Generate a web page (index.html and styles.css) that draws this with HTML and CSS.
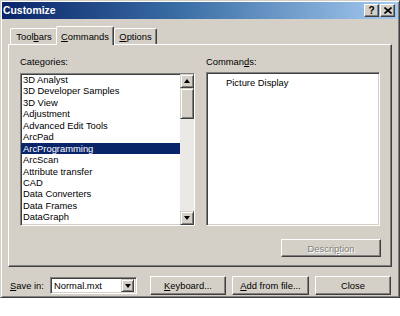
FILE: index.html
```html
<html>
<head>
    <title>Customize</title>
    <link rel="stylesheet" href="styles.css">
</head>
<body>
<div class="window">
    <div class="titlebar">
        <span class="caption">Customize</span>
        <div class="caption-buttons">
            <span class="cap-btn help">?</span>
            <span class="cap-btn close">
                <svg width="8" height="7" viewBox="0 0 8 7">
                    <path d="M0.5 0.5 L7.5 6.5 M7.5 0.5 L0.5 6.5" stroke="#000" stroke-width="1.6"/>
                </svg>
            </span>
        </div>
    </div>

    <div class="tabs">
        <div class="tab tab-toolbars">Tool<u>b</u>ars</div>
        <div class="tab tab-commands active"><u>C</u>ommands</div>
        <div class="tab tab-options"><u>O</u>ptions</div>
    </div>

    <div class="panel">
        <div class="columns">
            <div class="column">
                <div class="label">Cate<u>g</u>ories:</div>
                <div class="listbox">
                    <ul class="items">
                        <li>3D Analyst</li>
                        <li>3D Developer Samples</li>
                        <li>3D View</li>
                        <li>Adjustment</li>
                        <li>Advanced Edit Tools</li>
                        <li>ArcPad</li>
                        <li class="selected">ArcProgramming</li>
                        <li>ArcScan</li>
                        <li>Attribute transfer</li>
                        <li>CAD</li>
                        <li>Data Converters</li>
                        <li>Data Frames</li>
                        <li>DataGraph</li>
                        <li>Disconnected Editing</li>
                    </ul>
                    <div class="scrollbar">
                        <div class="sb-btn"><span class="arrow-up"></span></div>
                        <div class="sb-track">
                            <div class="sb-thumb"></div>
                        </div>
                        <div class="sb-btn"><span class="arrow-down"></span></div>
                    </div>
                </div>
            </div>
            <div class="column">
                <div class="label">Comman<u>d</u>s:</div>
                <div class="listbox commands">
                    <ul class="items">
                        <li>Picture Display</li>
                    </ul>
                </div>
            </div>
        </div>
        <div class="panel-actions">
            <div class="button disabled">Descri<u>p</u>tion</div>
        </div>
    </div>

    <div class="footer">
        <div class="save-label"><u>S</u>ave in:</div>
        <div class="combo">
            <span class="combo-text">Normal.mxt</span>
            <div class="combo-btn"><span class="arrow-down"></span></div>
        </div>
        <div class="button btn-keyboard"><u>K</u>eyboard...</div>
        <div class="button btn-add"><u>A</u>dd from file...</div>
        <div class="button btn-close">Close</div>
    </div>
</div>
</body>
</html>
```

FILE: styles.css
```css
body {
    margin: 0;
    background: #ffffff;
    font-family: 'Liberation Sans', Arial, sans-serif;
    font-size: 9.4px;
    color: #000000;
    overflow: hidden;
}

u {
    text-decoration: underline;
}

.window {
    width: 400px;
    height: 298px;
    box-sizing: border-box;
    background: #d4d0c8;
    border: 1px solid;
    border-color: #d4d0c8 #404040 #404040 #d4d0c8;
    box-shadow: inset 1px 1px #ffffff, inset -1px -1px #808080;
    padding: 1px;
    display: flex;
    flex-direction: column;
}

/* title bar */
.titlebar {
    height: 17px;
    display: flex;
    align-items: center;
    justify-content: space-between;
    padding: 0 3px 0 1px;
    background: linear-gradient(to right, #0a246a 0%, #3a6ea5 45%, #a6caf0 100%);
    color: #ffffff;
    font-weight: bold;
    font-size: 10.4px;
}

.caption-buttons {
    display: flex;
}

.cap-btn {
    width: 13px;
    height: 11px;
    display: flex;
    align-items: center;
    justify-content: center;
    background: #d4d0c8;
    color: #000000;
    border: 1px solid;
    border-color: #ffffff #404040 #404040 #ffffff;
    box-shadow: inset -1px -1px #808080;
    font-size: 10px;
    line-height: 11px;
}

.cap-btn.help {
    margin-right: 1px;
}

/* tabs */
.tabs {
    display: flex;
    align-items: flex-end;
    height: 18px;
    margin: 7px 0 0 8px;
}

.tab {
    height: 15px;
    box-sizing: content-box;
    display: flex;
    align-items: center;
    justify-content: center;
    background: #d4d0c8;
    border-top: 1px solid #ffffff;
    border-left: 1px solid #ffffff;
    border-right: 1px solid #404040;
    box-shadow: inset -1px 0 #808080;
    border-radius: 2px 2px 0 0;
}

.tab-toolbars {
    width: 46px;
}

.tab-commands {
    width: 56px;
}

.tab-options {
    width: 41px;
}

.tab.active {
    height: 18px;
    margin: 0 0 -1px -2px;
    position: relative;
    z-index: 1;
}

/* panel */
.panel {
    height: 223px;
    box-sizing: border-box;
    margin: 0 6px;
    padding: 11px 10px 0 11px;
    border: 1px solid;
    border-color: #ffffff #404040 #404040 #ffffff;
    box-shadow: inset -1px -1px #808080;
}

.columns {
    display: grid;
    grid-template-columns: 175px 174px;
    column-gap: 11px;
}

.label {
    height: 12px;
    line-height: 12px;
    margin-bottom: 5px;
}

.listbox {
    height: 153px;
    box-sizing: border-box;
    display: flex;
    background: #ffffff;
    border: 1px solid;
    border-color: #808080 #ffffff #ffffff #808080;
    box-shadow: inset 1px 1px #404040, inset -1px -1px #d4d0c8;
    overflow: hidden;
}

.listbox.commands {
    margin-top: -1px;
    height: 154px;
}

.items {
    list-style: none;
    margin: 0;
    padding: 0;
    flex: 1;
    overflow: hidden;
}

.items li {
    height: 11.45px;
    line-height: 11.45px;
    padding-left: 2px;
    white-space: nowrap;
}

.items li.selected {
    background: #0a246a;
    color: #ffffff;
}

.commands .items {
    padding: 4px 0 0 17px;
}

/* scrollbar */
.scrollbar {
    width: 14px;
    display: flex;
    flex-direction: column;
}

.sb-btn {
    height: 12px;
    display: flex;
    align-items: center;
    justify-content: center;
    background: #d4d0c8;
    border: 1px solid;
    border-color: #d4d0c8 #404040 #404040 #d4d0c8;
    box-shadow: inset 1px 1px #ffffff, inset -1px -1px #808080;
}

.sb-track {
    flex: 1;
    background: #ebe9e5;
}

.sb-thumb {
    height: 29px;
    background: #d4d0c8;
    border: 1px solid;
    border-color: #d4d0c8 #404040 #404040 #d4d0c8;
    box-shadow: inset 1px 1px #ffffff, inset -1px -1px #808080;
}

.arrow-up {
    width: 0;
    height: 0;
    border-left: 3.5px solid transparent;
    border-right: 3.5px solid transparent;
    border-bottom: 4px solid #000000;
}

.arrow-down {
    width: 0;
    height: 0;
    border-left: 3.5px solid transparent;
    border-right: 3.5px solid transparent;
    border-top: 4px solid #000000;
}

/* buttons */
.panel-actions {
    display: flex;
    justify-content: flex-end;
    margin-top: 13px;
}

.button {
    height: 19px;
    box-sizing: border-box;
    display: flex;
    align-items: center;
    justify-content: center;
    background: #d4d0c8;
    border: 1px solid;
    border-color: #ffffff #404040 #404040 #ffffff;
    box-shadow: inset -1px -1px #808080;
}

.panel-actions .button {
    width: 100px;
    height: 18px;
}

.button.disabled {
    color: #808080;
    text-shadow: 1px 1px #ffffff;
}

/* footer */
.footer {
    display: flex;
    align-items: center;
    margin-top: 9px;
    padding-left: 8px;
    height: 19px;
}

.save-label {
    width: 40px;
}

.combo {
    width: 87px;
    height: 17px;
    box-sizing: border-box;
    display: flex;
    align-items: center;
    background: #ffffff;
    border: 1px solid;
    border-color: #808080 #ffffff #ffffff #808080;
    box-shadow: inset 1px 1px #404040, inset -1px -1px #d4d0c8;
    padding: 2px 2px 2px 2px;
    margin-right: 13px;
}

.combo-text {
    flex: 1;
    padding-left: 1px;
}

.combo-btn {
    width: 13px;
    height: 13px;
    box-sizing: border-box;
    display: flex;
    align-items: center;
    justify-content: center;
    background: #d4d0c8;
    border: 1px solid;
    border-color: #d4d0c8 #404040 #404040 #d4d0c8;
    box-shadow: inset 1px 1px #ffffff, inset -1px -1px #808080;
}

.btn-keyboard {
    width: 76px;
    margin-right: 6px;
}

.btn-add {
    width: 77px;
    margin-right: 6px;
}

.btn-close {
    width: 76px;
}
```
